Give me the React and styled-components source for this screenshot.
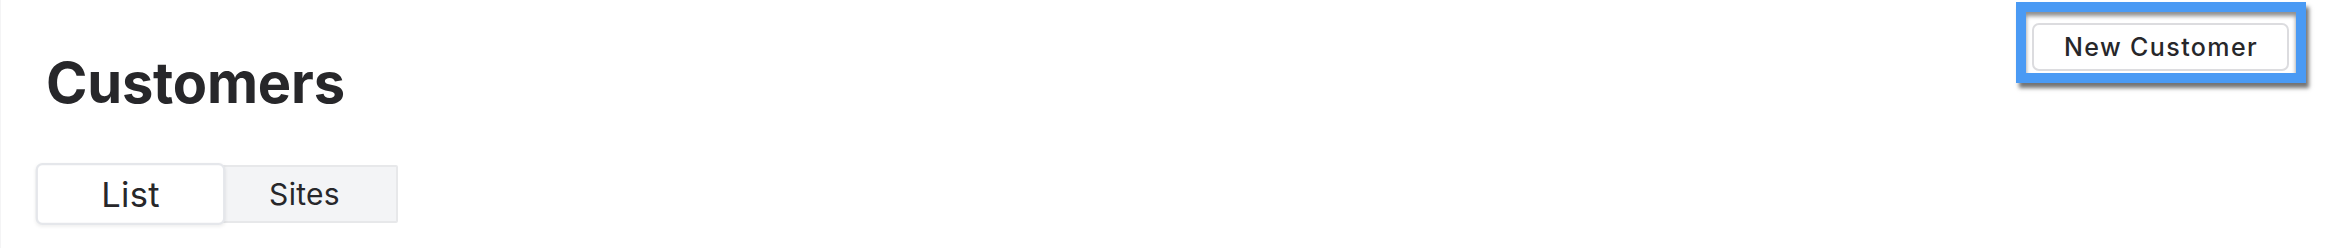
import React from "react";
import styled, { createGlobalStyle } from "styled-components";

const Global = createGlobalStyle`
  html, body { margin: 0; padding: 0; background: #ffffff; }
  body { font-family: Inter, "Noto Sans", sans-serif; color: #27272a; }
`;

const Page = styled.div`
  box-sizing: border-box;
  width: 2340px;
  height: 248px;
  border-left: 1px solid #f4f4f5;
  padding: 2px 34px 0 45px;
  display: flex;
  justify-content: space-between;
  align-items: flex-start;
`;

const Left = styled.div`
  display: flex;
  flex-direction: column;
  align-items: flex-start;
  padding-top: 48px;
`;

const Title = styled.h1`
  margin: 0;
  font-size: 56px;
  line-height: 1.2;
  font-weight: 700;
  color: #27272a;
  letter-spacing: -0.2px;
`;

const TabList = styled.div`
  margin-top: 48px;
  display: flex;
  background: #f3f4f6;
  border: 2px solid #e7e8ea;
  border-radius: 2px;
`;

const Tab = styled.button`
  box-sizing: border-box;
  height: 54px;
  padding: 0 ${(p) => (p.$active ? "55px" : "56px")};
  border: ${(p) => (p.$active ? "2px solid #e5e7eb" : "none")};
  border-radius: 6px;
  background: ${(p) => (p.$active ? "#ffffff" : "transparent")};
  box-shadow: ${(p) => (p.$active ? "0 1px 3px rgba(0,0,0,0.06)" : "none")};
  transform: ${(p) => (p.$active ? "scale(1.15)" : "none")};
  font-family: Inter, sans-serif;
  font-size: 30px;
  font-weight: 400;
  letter-spacing: 0.3px;
  color: #27272a;
  position: relative;
  z-index: ${(p) => (p.$active ? 1 : 0)};
`;

const Highlight = styled.div`
  border: 10px solid #4a9af4;
  padding: 11px 7px 2px 6px;
  background: #ffffff;
  box-shadow: 3px 5px 4px rgba(0, 0, 0, 0.55), inset 0 4px 4px rgba(0, 0, 0, 0.45);
`;

const Button = styled.button`
  box-sizing: border-box;
  display: block;
  width: 257px;
  height: 48px;
  border: 2px solid #dcdcdf;
  border-radius: 7px;
  background: #ffffff;
  font-family: Inter, sans-serif;
  font-size: 25px;
  font-weight: 500;
  letter-spacing: 1.4px;
  color: #27272a;
  padding: 0 0 0 1px;
`;

export default function App() {
  return (
    <>
      <Global />
      <Page>
        <Left>
          <Title>Customers</Title>
          <TabList>
            <Tab $active>List</Tab>
            <Tab>Sites</Tab>
          </TabList>
        </Left>
        <Highlight>
          <Button>New Customer</Button>
        </Highlight>
      </Page>
    </>
  );
}
